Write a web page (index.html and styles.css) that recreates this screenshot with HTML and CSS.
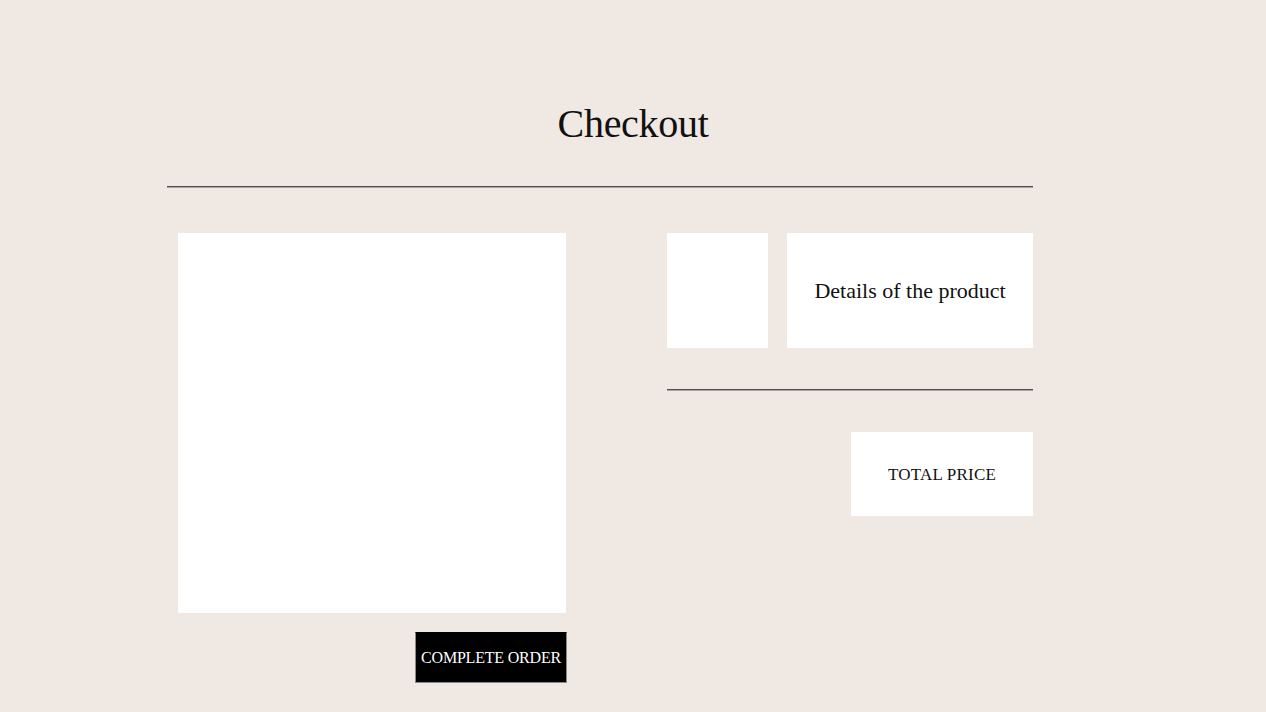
FILE: index.html
```html
<!DOCTYPE html>
<html>
<head>
<meta charset="utf-8">
<title>Checkout</title>
<link rel="stylesheet" href="styles.css">
</head>
<body>
<header class="page-head">
  <h1 class="title">Checkout</h1>
</header>
<div class="wrap">
  <hr class="rule">
  <main class="checkout">
    <section class="left">
      <div class="form-box"></div>
      <div class="actions">
        <button class="complete">COMPLETE ORDER</button>
      </div>
    </section>
    <section class="right">
      <div class="product">
        <div class="thumb"></div>
        <div class="details">Details of the product</div>
      </div>
      <hr class="rule rule-short">
      <div class="total-row">
        <div class="total">TOTAL PRICE</div>
      </div>
    </section>
  </main>
</div>
</body>
</html>
```

FILE: styles.css
```css
html, body {
  margin: 0;
  padding: 0;
  background: #f0e8e3;
  font-family: "Liberation Serif", "Times New Roman", serif;
  color: #111;
}
.page-head {
  padding-top: 100px;
  text-align: center;
}
.title {
  margin: 0;
  font-size: 40px;
  line-height: 48px;
  font-weight: normal;
  letter-spacing: -0.3px;
}
.wrap {
  width: 866px;
  margin-left: 167px;
  padding-top: 38px;
}
.rule {
  margin: 0;
  height: 0;
  border: 0;
  border-top: 1px solid #505050;
  border-bottom: 1px solid #a8a4a2;
}
.checkout {
  display: flex;
  justify-content: space-between;
  padding-top: 45px;
}
.left {
  width: 389px;
  padding-left: 11px;
}
.form-box {
  width: 388px;
  height: 380px;
  background: #fff;
}
.actions {
  display: flex;
  justify-content: flex-end;
  width: 388px;
  padding-top: 19px;
}
.complete {
  box-sizing: border-box;
  width: 152px;
  height: 51px;
  margin-right: -1px;
  background: #000;
  color: #fff;
  border: 1px solid #8a8a8a;
  border-top-color: #000;
  padding: 0;
  font-family: "Liberation Serif", "Times New Roman", serif;
  font-size: 16px;
  letter-spacing: -0.2px;
}
.right {
  width: 366px;
}
.product {
  display: flex;
  justify-content: space-between;
  height: 115px;
}
.thumb {
  width: 101px;
  background: #fff;
}
.details {
  width: 246px;
  background: #fff;
  display: flex;
  align-items: center;
  justify-content: center;
  font-size: 22px;
  padding-top: 1px;
  box-sizing: border-box;
}
.rule-short {
  margin-top: 41px;
}
.total-row {
  display: flex;
  justify-content: flex-end;
  padding-top: 41px;
}
.total {
  width: 182px;
  height: 84px;
  background: #fff;
  display: flex;
  align-items: center;
  justify-content: center;
  font-size: 17px;
  letter-spacing: 0.2px;
  padding-top: 1px;
  box-sizing: border-box;
}
```
